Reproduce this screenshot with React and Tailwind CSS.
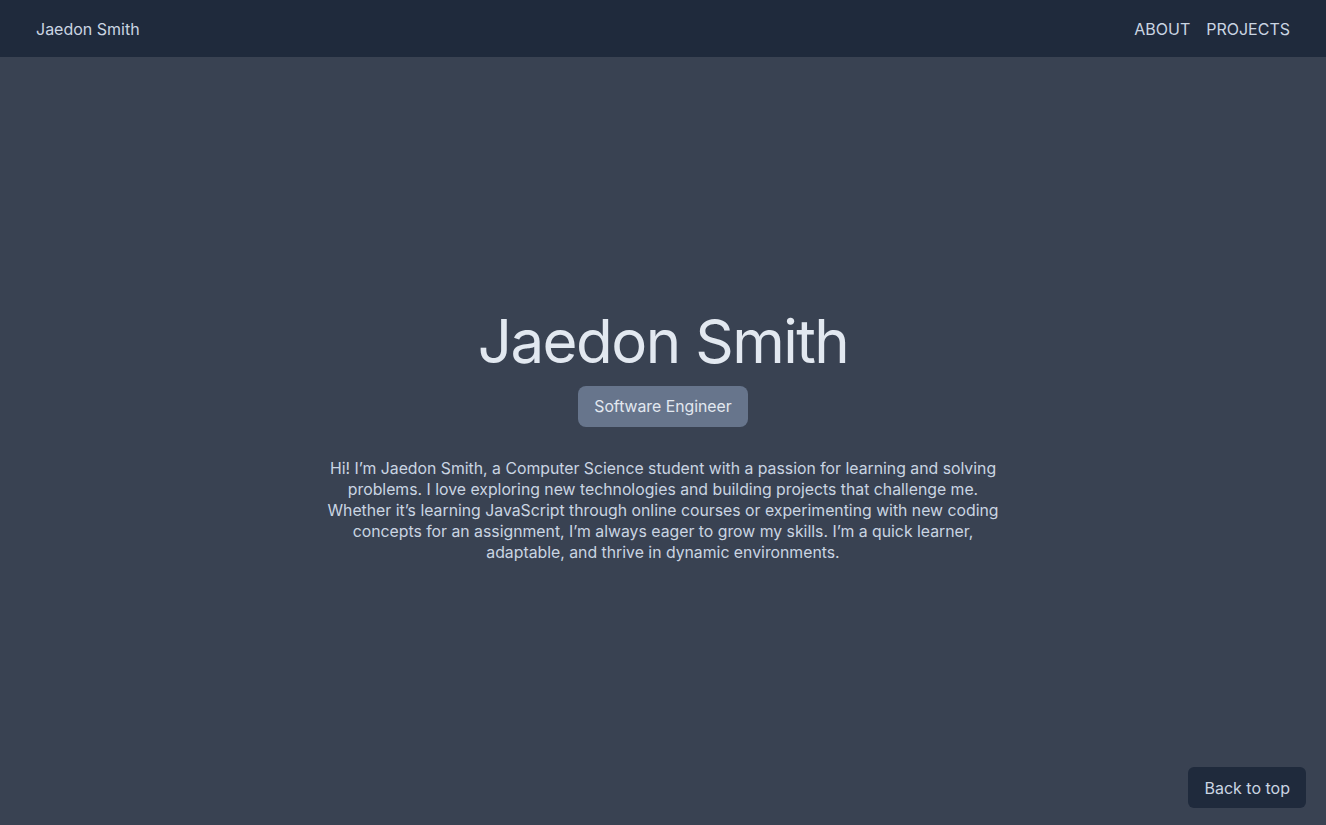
export default function App() {
  return (
    <div className="min-h-[825px] h-[825px] flex flex-col bg-[#394252] text-slate-300" style={{ fontFamily: 'Inter, "Noto Sans", sans-serif' }}>
      <nav className="h-[57px] bg-[#1f2a3c] flex items-center justify-between px-9 shrink-0">
        <span className="text-[16px] text-slate-300">Jaedon Smith</span>
        <div className="flex gap-4 text-[16px] text-slate-300">
          <span>ABOUT</span>
          <span>PROJECTS</span>
        </div>
      </nav>
      <main className="flex-1 flex flex-col items-center pt-[254px] relative">
        <h1 className="text-[60px] leading-none text-slate-200 font-normal tracking-tight">Jaedon Smith</h1>
        <div className="mt-[15px] bg-[#67758c] rounded-lg px-4 h-[41px] flex items-center text-[15.8px] text-slate-200">
          Software Engineer
        </div>
        <p className="mt-[31px] max-w-[680px] text-center text-[15.8px] leading-[21px] text-slate-300">
          Hi! I’m Jaedon Smith, a Computer Science student with a passion for learning and solving problems. I love exploring new technologies and building projects that challenge me. Whether it’s learning JavaScript through online courses or experimenting with new coding concepts for an assignment, I’m always eager to grow my skills. I’m a quick learner, adaptable, and thrive in dynamic environments.
        </p>
        <button className="absolute right-[20px] bottom-[17px] h-[41px] px-4 rounded-md bg-[#1f2a3c] text-[16px] text-slate-300">
          Back to top
        </button>
      </main>
    </div>
  );
}
